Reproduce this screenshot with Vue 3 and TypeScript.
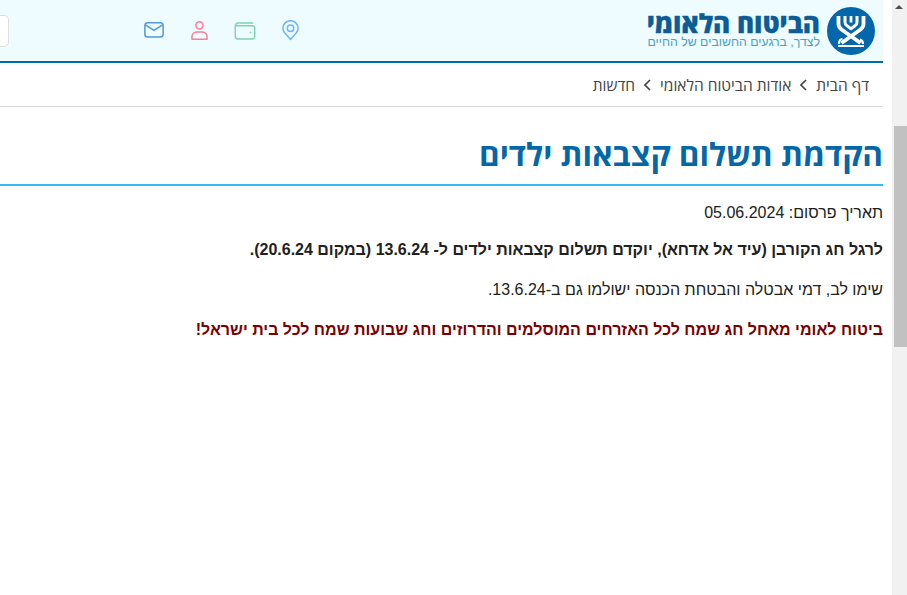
<script setup lang="ts">
const crumbs = ['דף הבית', 'אודות הביטוח הלאומי', 'חדשות']
</script>

<template>
  <div class="page">
    <main class="main" dir="rtl">
      <header class="top">
        <div class="brand">
          <svg class="emblem" viewBox="0 0 48 48" width="48" height="48" aria-hidden="true">
            <circle cx="24" cy="24" r="24" fill="#0467ac" />
            <g fill="none" stroke="#fff" stroke-linecap="butt" stroke-linejoin="round">
              <path d="M11.500 9v8c0 2.500 1 4 3 5.500L33.500 36" stroke-width="3.800" />
              <path d="M36.500 9v8c0 2.500-1 4-3 5.500L14.500 36" stroke-width="3.800" />
              <path d="M18 9v6.500c0 1.500.8 2.500 2 3.300l4 2.900 4-2.900c1.200-.8 2-1.800 2-3.300V9" stroke-width="3" />
              <path d="M24 9v6.500" stroke-width="2.800" />
              <path d="M11 39h26" stroke-width="2" />
              <path d="M12 37c0-3 1.500-5 3.500-5" stroke-width="2.200" />
              <path d="M36 37c0-2.500-1-4-3-4.500" stroke-width="2.200" />
            </g>
          </svg>
          <div class="brand-text">
            <div class="brand-name">הביטוח הלאומי</div>
            <div class="brand-sub">לצדך, ברגעים החשובים של החיים</div>
          </div>
        </div>
        <nav class="tools">
          <svg viewBox="1 0 18 22" width="17" height="21" fill="none" stroke="#6db5ff" stroke-width="1.600" aria-hidden="true">
            <path d="M10 20.500 3.600 13.200A8 8 0 0 1 2 8.600 8 8 0 0 1 18 8.600a8 8 0 0 1-1.600 4.600z" stroke-linejoin="round" />
            <circle cx="10" cy="8.600" r="3.400" />
          </svg>
          <svg viewBox="0 0 24 20" width="22" height="18" fill="none" stroke="#7dd3b0" stroke-width="1.600" aria-hidden="true">
            <path d="M21 1.200H4.500A3 3 0 0 0 1.200 4v11.800a3 3 0 0 0 3 3h16a2.600 2.600 0 0 0 2.600-2.600V6.600A2.400 2.400 0 0 0 20.400 4.200H2" />
            <circle cx="18" cy="11.500" r="1" fill="#7dd3b0" stroke="none" />
          </svg>
          <svg viewBox="0 0 18 22" width="17" height="21" fill="none" stroke="#ff7a94" stroke-width="1.600" aria-hidden="true">
            <circle cx="9" cy="5.500" r="3.800" />
            <path d="M1 20.200v-2.600c0-3 2.600-5 5.400-5h5.200c2.800 0 5.400 2 5.400 5v2.600z" stroke-linejoin="round" />
          </svg>
          <svg class="mail" viewBox="0 0 21 17" width="20" height="16" fill="none" stroke="#4f9bdc" stroke-width="1.600" aria-hidden="true">
            <rect x=".8" y=".8" width="19.400" height="15.200" rx="3" />
            <path d="m1.400 3 9.100 6 9.100-6" stroke-linejoin="round" />
          </svg>
        </nav>
        <div class="search"></div>
      </header>

      <div class="crumbs">
        <template v-for="(c, i) in crumbs" :key="c">
          <span>{{ c }}</span>
          <svg v-if="i < crumbs.length - 1" class="chev" viewBox="0 0 7 12" width="7" height="12" fill="none" stroke="#444" stroke-width="1.600" aria-hidden="true">
            <path d="M6 1 1 6l5 5" />
          </svg>
        </template>
      </div>

      <h1 class="title">הקדמת תשלום קצבאות ילדים</h1>

      <article class="body">
        <p class="date">תאריך פרסום: 05.06.2024</p>
        <p class="bold">לרגל חג הקורבן (עיד אל אדחא), יוקדם תשלום קצבאות ילדים ל- 13.6.24 (במקום 20.6.24).</p>
        <p>שימו לב, דמי אבטלה והבטחת הכנסה ישולמו גם ב-13.6.24.</p>
        <p class="bold greet">ביטוח לאומי מאחל חג שמח לכל האזרחים המוסלמים והדרוזים וחג שבועות שמח לכל בית ישראל!</p>
      </article>
    </main>

    <aside class="scrollbar" aria-hidden="true">
      <div class="arrow"></div>
      <div class="thumb"></div>
    </aside>
  </div>
</template>

<style>
html, body {
  margin: 0;
  background: #fff;
  overflow: hidden;
}
</style>

<style scoped>
.page {
  display: flex;
  justify-content: space-between;
  width: 907px;
  height: 595px;
  overflow: hidden;
  font-family: "Liberation Sans", Arial, sans-serif;
  color: #212121;
}

.main {
  width: 883px;
  flex: none;
}

.scrollbar {
  width: 15px;
  flex: none;
  background: #f1f1f1;
  position: relative;
}

.arrow {
  position: absolute;
  top: 5px;
  left: 3px;
  width: 0;
  height: 0;
  border-left: 4px solid transparent;
  border-right: 4px solid transparent;
  border-bottom: 4px solid #505050;
}

.thumb {
  position: absolute;
  top: 126px;
  left: 2px;
  right: 0;
  height: 221px;
  background: #c1c1c1;
}

.top {
  height: 61px;
  background: #effcff;
  border-bottom: 2px solid #0467ac;
  display: flex;
  align-items: center;
  padding-right: 8px;
}

.brand {
  display: flex;
  align-items: center;
  gap: 7px;
  width: 228px;
  flex: none;
}

.emblem {
  flex: none;
}

.brand-text {
  display: flex;
  flex-direction: column;
  margin-bottom: 2px;
}

.brand-name {
  font-family: "Open Sans", sans-serif;
  font-weight: 800;
  font-size: 26px;
  line-height: 25px;
  color: #0b5c97;
  white-space: nowrap;
  -webkit-text-stroke: 0.3px #0b5c97;
}

.brand-sub {
  font-size: 12.3px;
  line-height: 13px;
  color: #4a9fc2;
  white-space: nowrap;
}

.tools {
  display: flex;
  align-items: center;
  margin-right: 348px;
  gap: 26px;
  flex: none;
}

.mail {
  margin-right: 1px;
  margin-bottom: 2px;
}

.search {
  margin-right: auto;
  width: 30px;
  margin-left: -21px;
  height: 32px;
  box-sizing: border-box;
  background: #fff;
  border: 1px solid #ddd;
  border-radius: 5px;
  flex: none;
}

.crumbs {
  height: 44px;
  box-sizing: border-box;
  border-bottom: 1px solid #d9d9d9;
  display: flex;
  align-items: center;
  gap: 9px;
  padding-right: 14px;
  font-family: "Open Sans", sans-serif;
  font-size: 15.5px;
  color: #444;
}

.title {
  margin: 0;
  height: 79px;
  box-sizing: border-box;
  border-bottom: 2px solid #36b9ee;
  font-family: "Open Sans", sans-serif;
  font-weight: 700;
  font-size: 31.5px;
  line-height: 40px;
  padding-top: 27px;
  color: #0467a8;
}

.body {
  font-size: 16px;
  line-height: 20px;
  padding-top: 17px;
}

.body p {
  margin: 0 0 20px;
}

.body .date {
  margin-bottom: 17px;
}

.body .bold {
  font-weight: 700;
}

.body .greet {
  color: #7a0000;
}
</style>
